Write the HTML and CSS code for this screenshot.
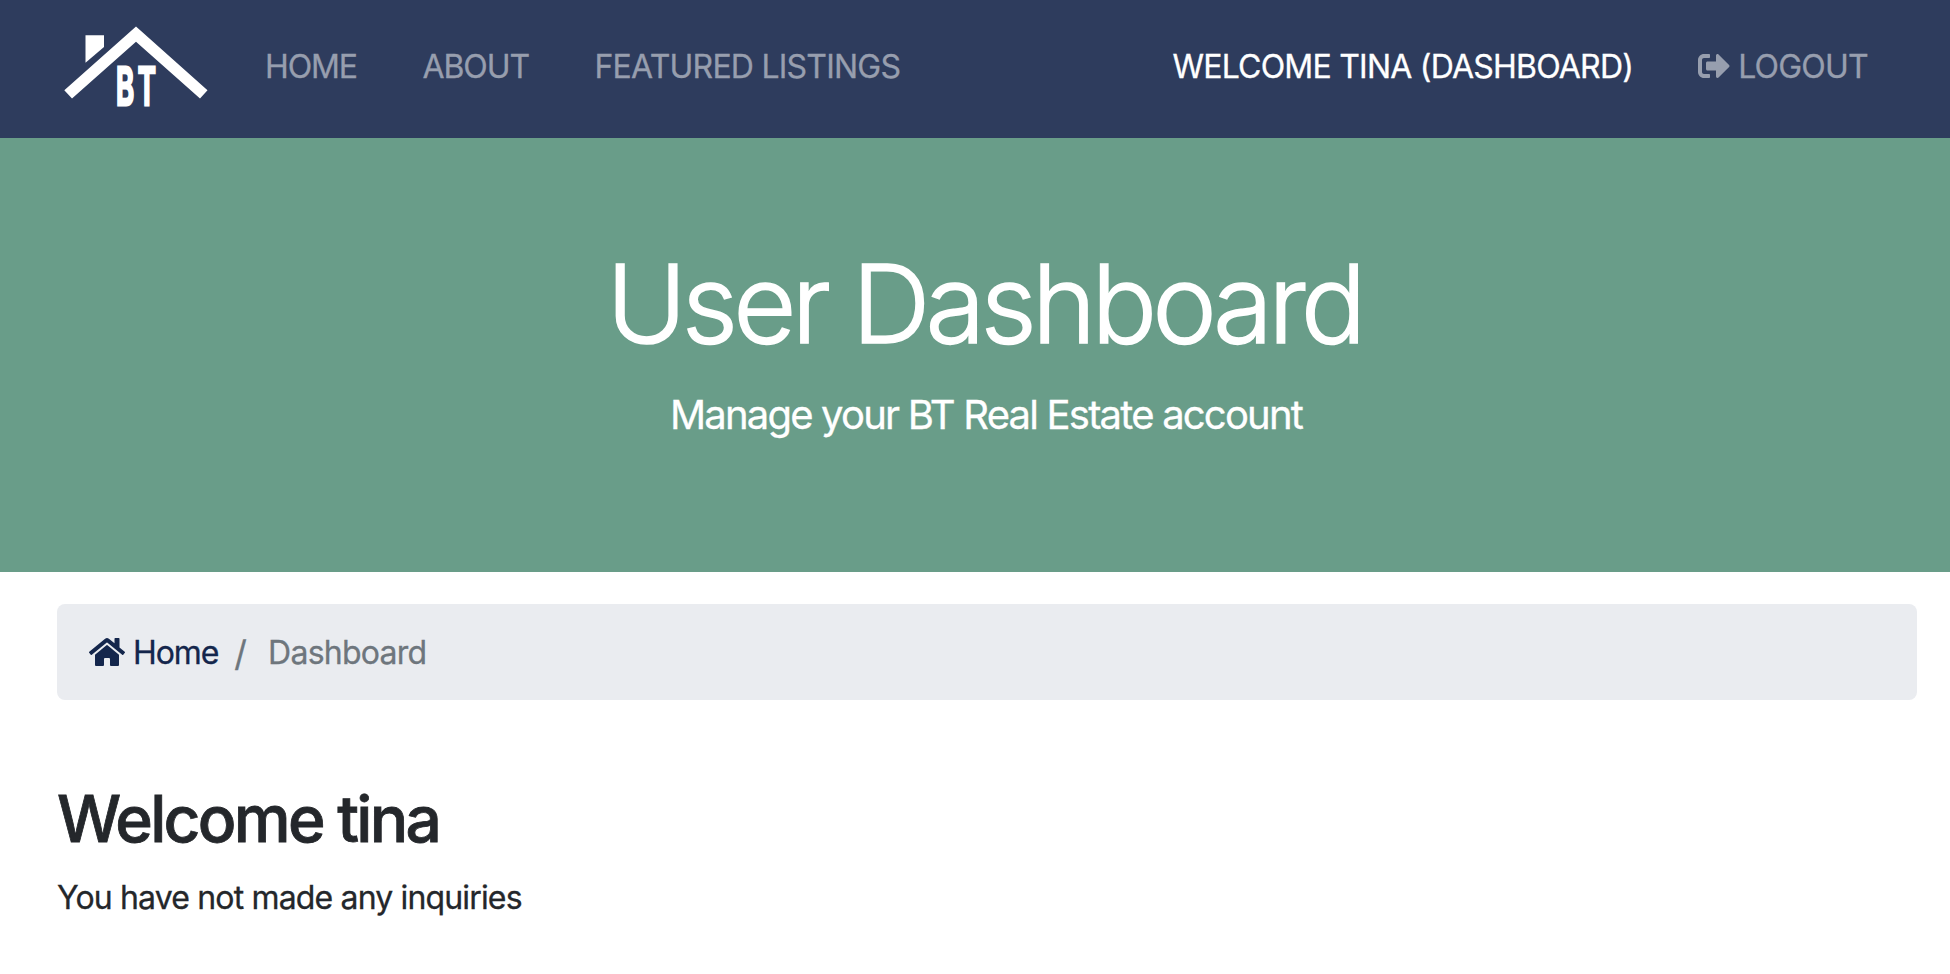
FILE: index.html
```html
<!DOCTYPE html>
<html lang="en">
<head>
<meta charset="utf-8">
<title>BT Real Estate | Dashboard</title>
<link rel="stylesheet" href="styles.css">
</head>
<body>
<header class="navbar">
  <a class="brand" href="#">
    <svg class="logo" viewBox="0 0 150 90" role="img" aria-label="BT">
      <path d="M28.500 17.300H47V29L28.500 44.800z"/>
      <path d="M7.300 72.300L79 8.500 150.500 72.300 143 80.500 79 23.700 15 80.500z"/>
      <text class="initials" transform="scale(.53 1)" x="111.500 152.500" y="87">BT</text>
    </svg>
  </a>
  <nav class="links">
    <a class="short" href="#">HOME</a>
    <a class="short" href="#">ABOUT</a>
    <a href="#">FEATURED LISTINGS</a>
  </nav>
  <nav class="links account">
    <a class="active" href="#">WELCOME TINA (DASHBOARD)</a>
    <a class="logout" href="#"><svg class="icon-exit" viewBox="0 0 512 512"><path d="M497 273L329 441c-15 15-41 4.500-41-17v-96H152c-13.300 0-24-10.700-24-24v-96c0-13.300 10.700-24 24-24h136V88c0-21.400 25.900-32 41-17l168 168c9.300 9.400 9.300 24.600 0 34zM192 436v-40c0-6.600-5.400-12-12-12H96c-17.700 0-32-14.300-32-32V160c0-17.700 14.300-32 32-32h84c6.600 0 12-5.400 12-12V76c0-6.600-5.400-12-12-12H96c-53 0-96 43-96 96v192c0 53 43 96 96 96h84c6.600 0 12-5.400 12-12z"/></svg>LOGOUT</a>
  </nav>
</header>
<section class="hero">
  <h1>User Dashboard</h1>
  <p>Manage your BT Real Estate account</p>
</section>
<main class="content">
  <nav class="breadcrumb">
    <a href="#"><svg class="icon-home" viewBox="0 0 576 512"><path d="M280.370 148.260L96 300.110V464a16 16 0 0 0 16 16l112.060-.290a16 16 0 0 0 15.920-16V368a16 16 0 0 1 16-16h64a16 16 0 0 1 16 16v95.640a16 16 0 0 0 16 16.050L464 480a16 16 0 0 0 16-16V300L295.670 148.260a12.190 12.190 0 0 0-15.300 0zM571.600 251.470L488 182.560V44.050a12 12 0 0 0-12-12h-56a12 12 0 0 0-12 12v72.610L318.470 43a48 48 0 0 0-61 0L4.340 251.470a12 12 0 0 0-1.600 16.900l25.500 31A12 12 0 0 0 45.150 301l235.220-193.740a12.190 12.190 0 0 1 15.300 0L530.900 301a12 12 0 0 0 16.900-1.600l25.500-31a12 12 0 0 0-1.700-16.930z"/></svg><span class="label">Home</span></a>
    <span class="slash">/</span>
    <span class="label">Dashboard</span>
  </nav>
  <h2>Welcome tina</h2>
  <p>You have not made any inquiries</p>
</main>
</body>
</html>
```
FILE: styles.css
```css
body { margin: 0; background: #fff; color: #24272b; font: 32px/48px Inter, "Liberation Sans", sans-serif; letter-spacing: -.77px; -webkit-text-stroke: .3px; }
h1, h2, p { margin: 0; }
a { color: inherit; text-decoration: none; }
svg { display: block; fill: currentColor; }
.navbar { box-sizing: border-box; display: flex; height: 138px; padding: 18px 82px 0 57px; background: #2e3c5d; color: #979eae; }
.brand { color: #fff; margin-right: 58px; }
.logo { width: 150px; height: 90px; overflow: visible; }
.initials { font: 600 52px Inter, sans-serif; letter-spacing: 0; stroke: #fff; stroke-width: 2.5px; vector-effect: non-scaling-stroke; -webkit-text-stroke: 0; }
.links { display: flex; align-items: flex-start; gap: 65.5px; padding-top: 25px; }
.short { letter-spacing: -1.1px; }
.account { margin-left: auto; gap: 65px; }
.active { color: #fff; }
.logout, .breadcrumb a { display: flex; align-items: center; }
.icon-exit { width: 32px; height: 32px; margin: -2px 8px 0 0; }
.hero { box-sizing: border-box; height: 434px; padding: 99px 33px 0 57px; background: #699d89; color: #fff; text-align: center; }
.hero h1 { margin-right: 6px; font-size: 109px; line-height: 132px; font-weight: 300; letter-spacing: -4.8px; -webkit-text-stroke: 1.5px; }
.hero p { margin: 16px 2px 0 0; font-size: 40px; line-height: 60px; letter-spacing: -1.8px; }
.content { padding: 32px 33px 0 57px; }
.breadcrumb { display: flex; padding: 25px 32px 23px; border-radius: 8px; background: #eaecf0; color: #6e767d; }
.breadcrumb a { color: #14264c; letter-spacing: -1.1px; }
.icon-home { width: 36px; height: 32px; margin: -2px 8px 0 0; }
.slash { margin: 0 22px 0 16px; font-size: 35px; }
.content h2 { margin-top: 81px; font-size: 64px; line-height: 76px; font-weight: 500; letter-spacing: -2.7px; -webkit-text-stroke: .8px; }
.content p { margin-top: 17px; letter-spacing: -.84px; }
```
